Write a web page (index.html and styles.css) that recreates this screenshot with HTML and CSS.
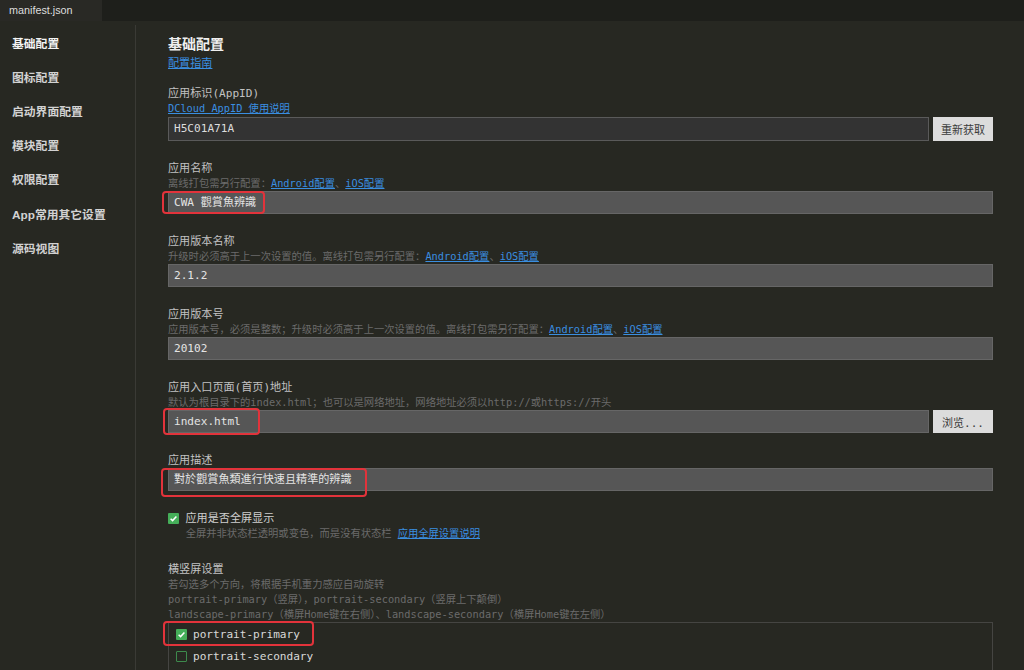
FILE: index.html
```html
<!DOCTYPE html>
<html lang="zh">
<head>
<meta charset="utf-8">
<title>manifest.json</title>
<link rel="stylesheet" href="styles.css">
</head>
<body>
<div class="tabbar"><div class="tab">manifest.json</div></div>
<div class="layout">
  <nav class="sidebar">
    <div class="nav-item active">基础配置</div>
    <div class="nav-item">图标配置</div>
    <div class="nav-item">启动界面配置</div>
    <div class="nav-item">模块配置</div>
    <div class="nav-item">权限配置</div>
    <div class="nav-item">App常用其它设置</div>
    <div class="nav-item">源码视图</div>
  </nav>
  <main class="main">
    <h1 class="title">基础配置</h1>
    <a class="guide">配置指南</a>

    <section class="field field-first">
      <div class="label">应用标识(AppID)</div>
      <div class="hint"><a class="link">DCloud AppID 使用说明</a></div>
      <div class="row row-first">
        <div class="input input-dark">H5C01A71A</div>
        <button class="btn">重新获取</button>
      </div>
    </section>

    <section class="field">
      <div class="label">应用名称</div>
      <div class="hint">离线打包需另行配置：<a class="link">Android配置</a>、<a class="link">iOS配置</a></div>
      <div class="input">CWA 觀賞魚辨識<span class="mark mark-name"></span></div>
    </section>

    <section class="field">
      <div class="label">应用版本名称</div>
      <div class="hint">升级时必须高于上一次设置的值。离线打包需另行配置：<a class="link">Android配置</a>、<a class="link">iOS配置</a></div>
      <div class="input">2.1.2</div>
    </section>

    <section class="field">
      <div class="label">应用版本号</div>
      <div class="hint">应用版本号，必须是整数；升级时必须高于上一次设置的值。离线打包需另行配置：<a class="link">Android配置</a>、<a class="link">iOS配置</a></div>
      <div class="input">20102</div>
    </section>

    <section class="field">
      <div class="label">应用入口页面(首页)地址</div>
      <div class="hint">默认为根目录下的index.html；也可以是网络地址，网络地址必须以http://或https://开头</div>
      <div class="row">
        <div class="input">index.html<span class="mark mark-entry"></span></div>
        <button class="btn btn-sm">浏览...</button>
      </div>
    </section>

    <section class="field">
      <div class="label">应用描述</div>
      <div class="input">對於觀賞魚類進行快速且精準的辨識<span class="mark mark-desc"></span></div>
    </section>

    <section class="field">
      <div class="check-row">
        <span class="cb"><svg viewBox="0 0 11 11" width="11" height="11"><path d="M2.6 5.7 L4.6 7.6 L8.4 3.5" fill="none" stroke="#fff" stroke-width="1.5"/></svg></span>
        <span>应用是否全屏显示</span>
      </div>
      <div class="hint check-hint">全屏并非状态栏透明或变色，而是没有状态栏<a class="link link-gap">应用全屏设置说明</a></div>
    </section>

    <section class="field field-orient">
      <div class="label">横竖屏设置</div>
      <div class="hint">若勾选多个方向，将根据手机重力感应自动旋转</div>
      <div class="hint">portrait-primary（竖屏），portrait-secondary（竖屏上下颠倒）</div>
      <div class="hint">landscape-primary（横屏Home键在右侧）、landscape-secondary（横屏Home键在左侧）</div>
      <div class="opt-box">
        <div class="opt">
          <span class="cb"><svg viewBox="0 0 11 11" width="11" height="11"><path d="M2.6 5.7 L4.6 7.6 L8.4 3.5" fill="none" stroke="#fff" stroke-width="1.5"/></svg></span>
          <span>portrait-primary</span>
          <span class="mark mark-opt"></span>
        </div>
        <div class="opt">
          <span class="cb cb-empty"></span>
          <span>portrait-secondary</span>
        </div>
      </div>
    </section>
  </main>
</div>
</body>
</html>
```

FILE: styles.css
```css
* { box-sizing: border-box; }

body {
  margin: 0;
  height: 670px;
  overflow: hidden;
  background: #272822;
  font-family: "Noto Sans CJK SC", sans-serif;
}

.tabbar {
  height: 21px;
  background: #1e1f1b;
  display: flex;
}

.tab {
  width: 102px;
  background: #292925;
  padding-left: 9px;
  font: 10.8px/21px "Liberation Sans", "Noto Sans CJK SC", sans-serif;
  color: #dedede;
}

.layout {
  display: flex;
  height: 649px;
}

.sidebar {
  width: 136px;
  flex: none;
  margin-top: 4px;
  padding-top: 0;
  border-right: 1px solid #3a3a35;
}

.nav-item {
  height: 34.2px;
  display: flex;
  align-items: center;
  padding-left: 12px;
  font: bold 11.8px "Liberation Sans", "Noto Sans CJK SC", sans-serif;
  color: #d2d2d2;
}

.nav-item.active { color: #f4f4f4; }

.main {
  flex: 1;
  padding: 13px 31px 0 32px;
  --mono: "DejaVu Sans Mono", "Noto Sans CJK SC", monospace;
}

.title {
  margin: 0;
  font: bold 14px/18px "Noto Sans CJK SC", sans-serif;
  color: #efefef;
}

.guide {
  display: block;
  margin-top: 3px;
  font: 11.1px/15px "Noto Sans CJK SC", sans-serif;
  color: #3a8ee0;
  text-decoration: underline;
}

.field { margin-top: 20px; }
.field-first { margin-top: 16px; }
.field-orient { margin-top: 21px; }

.label {
  font: 11.1px/15px var(--mono);
  color: #c2c2c2;
  white-space: nowrap;
}

.hint {
  font: 10.3px/15px var(--mono);
  color: #6b6b6b;
  white-space: nowrap;
}

.link {
  color: #3a8ee0;
  text-decoration: underline;
}

.link-gap { margin-left: 6px; }

.row {
  display: flex;
  gap: 4px;
  align-items: flex-start;
}

.row-first { margin-top: 1px; }

.input {
  position: relative;
  flex: 1;
  height: 23px;
  background: #565656;
  border: 1px solid #666;
  padding-left: 5px;
  font: 11.1px/21px var(--mono);
  color: #e4e4e4;
  white-space: nowrap;
}

.input-dark {
  height: 24px;
  line-height: 22px;
  background: #333333;
  border-color: #5a5a5a;
  color: #dcdcdc;
}

.btn {
  width: 60px;
  height: 24px;
  flex: none;
  padding: 0;
  border: none;
  background: #dcdcdc;
  color: #3a3a3a;
  font: 11px var(--mono);
}

.btn-sm { height: 23px; }

.check-row {
  display: flex;
  align-items: center;
  gap: 6.5px;
  font: 11.1px/15px var(--mono);
  color: #cfcfcf;
}

.cb {
  width: 11px;
  height: 11px;
  flex: none;
  display: flex;
  background: #45ae59;
  border-radius: 1px;
}

.cb-empty {
  background: transparent;
  border: 1px solid #3d8a4c;
}

.check-hint { padding-left: 17.7px; }

.opt-box {
  height: 60px;
  border: 1px solid #454542;
  border-bottom: none;
  padding: 0 7px;
}

.opt {
  position: relative;
  height: 22px;
  display: flex;
  align-items: center;
  gap: 6px;
  font: 11.1px var(--mono);
  color: #d8d8d8;
}

.mark {
  position: absolute;
  border: 2px solid #e2333b;
  border-radius: 4px;
  pointer-events: none;
}

.mark-name { left: -6.7px; top: -1px; width: 102.7px; height: 23.4px; }
.mark-entry { left: -6.3px; top: -3.3px; width: 97.3px; height: 27.3px; }
.mark-desc { left: -8px; top: -1.3px; width: 205.7px; height: 29px; }
.mark-opt { left: -12.7px; top: -2.3px; width: 150.7px; height: 25px; }
```
